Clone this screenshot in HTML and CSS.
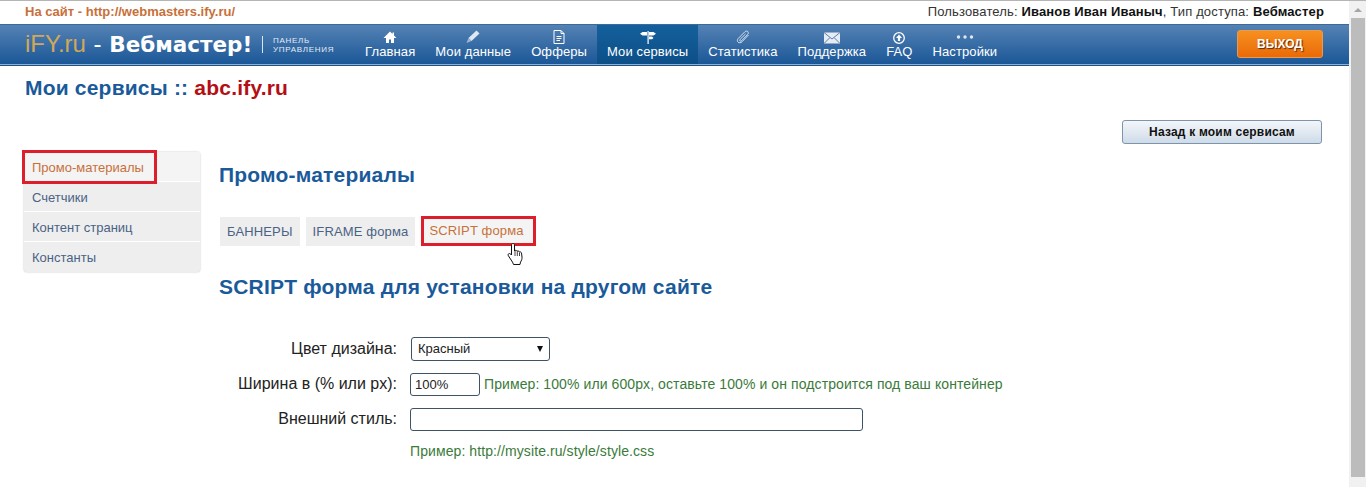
FILE: index.html
```html
<!DOCTYPE html>
<html lang="ru">
<head>
    <meta charset="UTF-8">
    <meta name="viewport" content="width=device-width, initial-scale=1.0">
    <title>Мои сервисы</title>
    <link rel="stylesheet" href="styles.css">
</head>
<body>
    <div class="page">
        <div class="topbar">
            <a class="site-link" href="#">На сайт - http://webmasters.ify.ru/</a>
            <div class="user-info">Пользователь: <b>Иванов Иван Иваныч</b>, Тип доступа: <b>Вебмастер</b></div>
        </div>

        <div class="header">
            <div class="logo"><span class="logo-ify">iFY.ru</span> - <b>Вебмастер!</b></div>
            <div class="logo-sub">ПАНЕЛЬ<br>УПРАВЛЕНИЯ</div>
            <div class="menu">
                <a class="menu-item" href="#">
                    <svg viewBox="0 0 14 14"><path d="M7 1.500 .5 8H3v5h3V9.500h2V13h3V8h2.500L11 5.500V2.500H9.500v1.500z" fill="#fff"/></svg>
                    Главная
                </a>
                <a class="menu-item" href="#">
                    <svg viewBox="0 0 14 14"><path d="M10.500 .5 13.500 3.500 5.500 11 2.500 8z" fill="#dfe8f2"/><path d="M2.500 8 5.500 11 .5 13z" fill="#9fb6d2"/></svg>
                    Мои данные
                </a>
                <a class="menu-item" href="#">
                    <svg viewBox="0 0 14 14"><path d="M2 .5h7l3 3v10H2zM9 .5v3h3M4.500 6.500h5M4.500 8.500h5M4.500 10.500h3.500" fill="none" stroke="#fff"/></svg>
                    Офферы
                </a>
                <a class="menu-item active" href="#">
                    <svg class="icon-wide" viewBox="0 0 16 14"><path d="M7.500 1h1.200v13H7.500z" fill="#fff"/><path d="M7 2v3.500H2.500L0 3.700 2.500 2zM9 2h4.500L16 3.700 13.500 5.500H9zM9 6.500h3L13.500 8 12 9.200H9z" fill="#fff"/></svg>
                    Мои сервисы
                </a>
                <a class="menu-item" href="#">
                    <svg viewBox="0 0 14 14"><path d="M12.500 5 6 11.800c-1.200 1.200-3 1.300-4 .3s-.8-2.600.3-3.700L8.800 1.800c.9-.9 2.200-1 3-.2s.7 2-.1 2.800L5.500 10.800c-.5.500-1.200.5-1.600.1-.4-.4-.3-1.100.2-1.600L9.500 4" fill="none" stroke="#dfe8f2" stroke-width=".9"/></svg>
                    Статистика
                </a>
                <a class="menu-item" href="#">
                    <svg class="icon-wide" viewBox="0 0 16 14"><path d="M0 2.500h16v11H0z" fill="#e6ecf4"/><path d="M0 2.500 8 9l8-6.500M0 13.500 6 7.500M16 13.500 10 7.500" fill="none" stroke="#5d7fa8"/></svg>
                    Поддержка
                </a>
                <a class="menu-item" href="#">
                    <svg viewBox="0 0 14 14"><circle cx="7" cy="8" r="5.300" fill="none" stroke="#fff" stroke-width="1.300"/><path d="M7 4.500 10 8H8.100v3H5.900V8H4z" fill="#fff"/></svg>
                    FAQ
                </a>
                <a class="menu-item" href="#">
                    <svg class="icon-dots" viewBox="0 0 18 14"><circle cx="2.500" cy="7" r="1.700" fill="#dfe8f2"/><circle cx="9" cy="7" r="1.700" fill="#dfe8f2"/><circle cx="15.500" cy="7" r="1.700" fill="#dfe8f2"/></svg>
                    Настройки
                </a>
            </div>
            <a class="logout" href="#">ВЫХОД</a>
        </div>

        <h1 class="page-title">Мои сервисы :: <span class="site-name">abc.ify.ru</span></h1>

        <div class="back-row">
            <a class="back-btn" href="#">Назад к моим сервисам</a>
        </div>

        <div class="columns">
            <div class="sidebar">
                <a class="side-item current" href="#">Промо-материалы</a>
                <a class="side-item" href="#">Счетчики</a>
                <a class="side-item" href="#">Контент страниц</a>
                <a class="side-item" href="#">Константы</a>
            </div>

            <div class="content">
                <h2 class="title-promo">Промо-материалы</h2>
                <div class="tabs">
                    <a class="tab" href="#">БАННЕРЫ</a>
                    <a class="tab" href="#">IFRAME форма</a>
                    <a class="tab current" href="#">SCRIPT форма
                        <svg class="cursor" viewBox="0 0 18 24"><path d="M6 1.500c1 0 1.500.7 1.500 1.500v6l.5-.5c1-.4 1.800 0 2 .7 1-.5 2-.2 2.300.7 1-.3 2 .2 2.200 1.200l.5 4c.2 2-.5 3.500-1.500 5l-.5 2.400H6.500l-1-2.400L1.500 14c-.7-1-.4-2 .3-2.300.8-.4 1.700 0 2.700 1.300V3c0-.8.600-1.500 1.500-1.500z" fill="#fff" stroke="#111" stroke-width="1"/><path d="M8 9v5M10.300 9.500V14M12.500 10.500V14" stroke="#111" stroke-width=".8" fill="none"/></svg>
                    </a>
                </div>
                <h2 class="title-form">SCRIPT форма для установки на другом сайте</h2>

                <div class="form">
                    <div class="form-row">
                        <label class="form-label">Цвет дизайна:</label>
                        <div class="select-box">
                            <select class="select-color">
                                <option>Красный</option>
                            </select>
                            <span class="arrow"></span>
                        </div>
                    </div>
                    <div class="form-row">
                        <label class="form-label">Ширина в (% или px):</label>
                        <input class="input-short" type="text" value="100%">
                        <span class="hint">Пример: 100% или 600px, оставьте 100% и он подстроится под ваш контейнер</span>
                    </div>
                    <div class="form-row">
                        <label class="form-label">Внешний стиль:</label>
                        <input class="input-long" type="text">
                    </div>
                    <div class="form-row hint-row">
                        <span class="hint">Пример: http://mysite.ru/style/style.css</span>
                    </div>
                </div>
            </div>
        </div>
    </div>

    <div class="scrollbar">
        <div class="scroll-btn"><span class="scroll-up"></span></div>
        <div class="scroll-thumb"></div>
    </div>
</body>
</html>
```

FILE: styles.css
```css
html, body {
    margin: 0;
    height: 100%;
    overflow: hidden;
}
body {
    display: flex;
    font-family: "Liberation Sans", Arial, sans-serif;
    font-size: 14px;
    color: #222;
    background: #fff;
}
a {
    text-decoration: none;
}
.page {
    flex: 1;
    min-width: 0;
    border-top: 1px solid #b5b5b5;
}
.topbar {
    display: flex;
    justify-content: space-between;
    height: 23px;
    padding: 0 25px;
    line-height: 22px;
    font-size: 13px;
}
.site-link {
    color: #c8703a;
    font-weight: bold;
}
.user-info {
    color: #333;
    letter-spacing: .15px;
}
.user-info b {
    color: #111;
}
.header {
    display: flex;
    align-items: stretch;
    box-sizing: border-box;
    height: 41px;
    padding-left: 25px;
    background: linear-gradient(#5482b4, #1b5797);
    border-top: 1px solid #3d6a9c;
    border-bottom: 1px solid #8fb0d0;
    box-shadow: 0 1px 0 #1d5288;
}
.logo {
    width: 226px;
    padding-top: 4px;
    font-size: 24px;
    line-height: 30px;
    word-spacing: 1px;
    color: #fff;
    white-space: nowrap;
}
.logo b {
    font-family: "DejaVu Sans", sans-serif;
    font-size: 21.500px;
}
.logo-ify {
    color: #d2a75a;
}
.logo-sub {
    height: 17px;
    margin: 11px 0 0 11px;
    padding-left: 10px;
    border-left: 1px solid #dbe5f0;
    font-size: 8px;
    line-height: 9px;
    letter-spacing: .7px;
    color: #e3ebf4;
    white-space: nowrap;
}
.menu {
    display: flex;
    margin-left: 21px;
}
.menu-item {
    display: flex;
    flex-direction: column;
    align-items: center;
    padding: 5px 10px 0;
    font-size: 13px;
    line-height: 16px;
    letter-spacing: .1px;
    color: #fff;
    white-space: nowrap;
}
.menu-item svg {
    width: 14px;
    height: 14px;
}
.menu-item .icon-wide {
    width: 16px;
}
.menu-item .icon-dots {
    width: 18px;
}
.menu-item.active {
    background: linear-gradient(#14609c, #0d4f88);
}
.logout {
    box-sizing: border-box;
    width: 86px;
    height: 28px;
    margin: 5px 26px 0 auto;
    border: 1px solid #e89a50;
    border-radius: 3px;
    background: linear-gradient(#f79020, #e96a08);
    color: #fff;
    font-size: 12px;
    font-weight: bold;
    line-height: 27px;
    text-align: center;
    text-shadow: 1px 1px 1px #5a2a00;
}
.page-title {
    margin: 11px 0 0 25px;
    font-size: 21px;
    line-height: 24px;
    letter-spacing: .2px;
    color: #1a5a9a;
}
.site-name {
    color: #b30f14;
}
.back-row {
    display: flex;
    justify-content: flex-end;
    margin-top: 20px;
    padding-right: 27px;
}
.back-btn {
    box-sizing: border-box;
    width: 200px;
    height: 24px;
    border: 1px solid #7d94ad;
    border-radius: 3px;
    background: linear-gradient(#f3f6fa, #cfdbe9);
    color: #111;
    font-size: 12px;
    font-weight: bold;
    letter-spacing: .2px;
    line-height: 22px;
    text-align: center;
}
.columns {
    display: flex;
    margin-top: 8px;
    padding-left: 24px;
}
.sidebar {
    width: 176px;
    height: 120px;
    flex-shrink: 0;
    border-radius: 3px;
    background: #eee;
    box-shadow: 0 0 2px #bbb;
}
.side-item {
    display: block;
    box-sizing: border-box;
    position: relative;
    height: 30px;
    padding-left: 8px;
    border-bottom: 1px solid #fff;
    color: #4a6285;
    font-size: 13px;
    line-height: 31px;
}
.side-item:last-child {
    border-bottom: 0;
}
.side-item.current {
    background: #f4f4f4;
    color: #c8703a;
}
.side-item.current::after {
    content: "";
    position: absolute;
    left: -2px;
    top: -2px;
    width: 129px;
    height: 28px;
    border: 3px solid #dc1f2b;
}
.content {
    flex: 1;
    margin-left: 19px;
}
.title-promo {
    margin: 12px 0 0;
    font-size: 21px;
    line-height: 22px;
    letter-spacing: .2px;
    color: #1a5a9a;
}
.tabs {
    display: flex;
    gap: 6px;
    margin: 31px 0 0 1px;
}
.tab {
    position: relative;
    height: 29px;
    padding: 0 7px;
    background: #eee;
    color: #4a6285;
    font-size: 13px;
    letter-spacing: .15px;
    line-height: 29px;
}
.tab.current {
    box-sizing: border-box;
    height: 30px;
    margin-top: -1px;
    padding: 0 9px 0 5px;
    border: 3px solid #dc1f2b;
    background: #f4f4f4;
    color: #c8703a;
    line-height: 24px;
}
.cursor {
    position: absolute;
    left: 83px;
    top: 23px;
    width: 18px;
    height: 24px;
}
.title-form {
    margin: 29px 0 0;
    font-size: 21px;
    line-height: 24px;
    letter-spacing: .2px;
    color: #1a5a9a;
}
.form {
    margin-top: 38px;
}
.form-row {
    display: flex;
    align-items: center;
    height: 24px;
    margin-bottom: 11px;
}
.form-label {
    width: 178px;
    margin-right: 13px;
    font-size: 16px;
    color: #222;
    text-align: right;
    white-space: nowrap;
}
.select-box {
    position: relative;
    margin-left: 1px;
}
.select-color {
    display: block;
    box-sizing: border-box;
    width: 139px;
    height: 24px;
    padding: 0 0 2px 6px;
    border: 1px solid #3f5366;
    border-radius: 3px;
    background: #fff;
    appearance: none;
    font-family: inherit;
    font-size: 13px;
    color: #222;
}
.arrow {
    position: absolute;
    right: 7px;
    top: 9px;
    border-top: 6px solid #111;
    border-left: 3px solid transparent;
    border-right: 3px solid transparent;
}
input {
    box-sizing: border-box;
    height: 23px;
    padding: 0 4px;
    border: 1px solid #3f5366;
    border-radius: 3px;
    font-family: inherit;
    font-size: 13px;
    color: #222;
}
.input-short {
    width: 70px;
}
.input-long {
    width: 453px;
}
.hint {
    margin-left: 4px;
    font-size: 14px;
    letter-spacing: .09px;
    color: #3a7a3a;
    white-space: nowrap;
}
.hint-row {
    margin-top: -3px;
    padding-left: 187px;
}
.scrollbar {
    flex: none;
    box-sizing: border-box;
    width: 17px;
    padding-left: 2px;
    border-top: 1px solid #b5b5b5;
    background: #f1f1f1;
}
.scroll-btn {
    display: flex;
    justify-content: center;
    box-sizing: border-box;
    width: 13px;
    height: 17px;
    padding-top: 7px;
}
.scroll-up {
    height: 0;
    border-bottom: 4px solid #a6a6a6;
    border-left: 4px solid transparent;
    border-right: 4px solid transparent;
}
.scroll-thumb {
    width: 14px;
    height: 459px;
    background: #bcbcbc;
}
```
